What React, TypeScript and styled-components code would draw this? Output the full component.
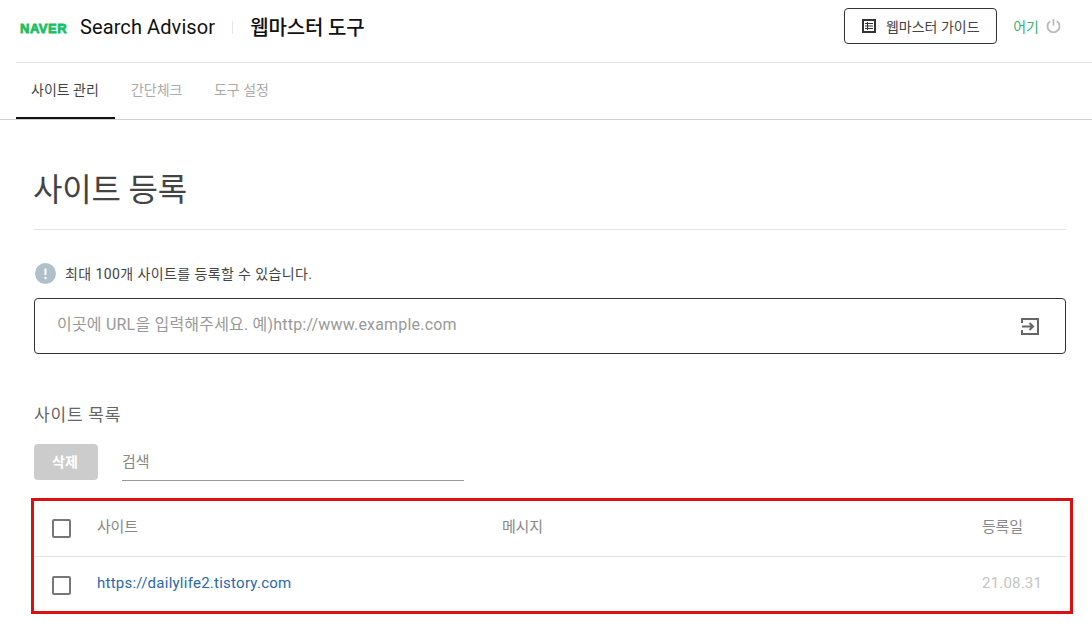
import styled, { createGlobalStyle } from "styled-components";

const GlobalStyle = createGlobalStyle`
  html, body {
    margin: 0;
    padding: 0;
    background: #fff;
    overflow: hidden;
  }
  body {
    font-family: Roboto, "Noto Sans CJK KR", sans-serif;
    color: #222;
  }
`;

const Page = styled.div`
  width: 1092px;
  height: 632px;
  overflow: hidden;
`;

const Header = styled.header`
  height: 62px;
  margin-left: 16px;
  padding: 0 31px 0 4px;
  display: flex;
  align-items: center;
  border-bottom: 1px solid #e2e2e2;
`;

const HeaderInner = styled.div`
  flex: 1;
  display: flex;
  align-items: center;
  margin-bottom: 9px;
`;

const NaverLogo = styled.span`
  width: 60px;
  margin-top: 4px;
  font-family: "Liberation Sans", sans-serif;
  font-size: 13px;
  font-weight: 700;
  letter-spacing: 0.5px;
  color: #15c05f;
  -webkit-text-stroke: 0.8px #15c05f;
`;

const BrandName = styled.span`
  font-size: 20px;
  letter-spacing: 0.1px;
  color: #111;
`;

const BrandDivider = styled.i`
  width: 1px;
  height: 13px;
  margin: 2px 17px 0 17px;
  background: #e4e4e4;
`;

const ToolName = styled.strong`
  font-size: 20px;
  font-weight: 500;
  letter-spacing: -0.15px;
  color: #111;
`;

const HeaderRight = styled.div`
  margin: 0 0 2px auto;
  display: flex;
  align-items: center;
`;

const GuideButton = styled.button`
  width: 153px;
  height: 36px;
  display: flex;
  align-items: center;
  justify-content: center;
  gap: 10px;
  padding: 0;
  background: #fff;
  border: 1px solid #333;
  border-radius: 4px;
  font-family: inherit;
  font-size: 14px;
  color: #444;
`;

const Logout = styled.span`
  margin-left: 16px;
  display: flex;
  align-items: center;
  gap: 7px;
  font-size: 14px;
  color: #2fb36f;
`;

const Tabs = styled.nav`
  height: 56px;
  padding-left: 16px;
  display: flex;
  border-bottom: 1px solid #cfcfcf;
`;

const Tab = styled.a<{ $active?: boolean }>`
  height: 56px;
  box-sizing: border-box;
  padding: 0 ${(p) => (p.$active ? "16px" : "15.5px")} 3px ${(p) => (p.$active ? "15px" : "16px")};
  display: flex;
  align-items: center;
  font-size: 14px;
  color: ${(p) => (p.$active ? "#444" : "#aaa")};
  border-bottom: 2px solid ${(p) => (p.$active ? "#111" : "transparent")};
`;

const Main = styled.main`
  padding: 0 26px 0 34px;
`;

const Title = styled.h1`
  margin: 0;
  height: 110px;
  box-sizing: border-box;
  padding-top: 47px;
  font-size: 32px;
  line-height: 46px;
  font-weight: 400;
  letter-spacing: -0.2px;
  text-indent: -1px;
  color: #444;
  border-bottom: 1px solid #e2e2e2;
`;

const Notice = styled.p`
  margin: 33px 0 0 1px;
  height: 20px;
  display: flex;
  align-items: center;
  gap: 9px;
  font-size: 14px;
  letter-spacing: 0.4px;
  color: #444;
`;

const UrlBox = styled.div`
  margin-top: 15px;
  height: 56px;
  box-sizing: border-box;
  padding: 0 25px 0 22px;
  display: flex;
  align-items: center;
  justify-content: space-between;
  border: 1px solid #333;
  border-radius: 4px;
`;

const UrlInput = styled.input`
  flex: 1;
  border: 0;
  outline: 0;
  padding: 0 0 3px;
  font-family: inherit;
  font-size: 16px;
  letter-spacing: 0.2px;
  color: #333;
  &::placeholder {
    color: #999;
    opacity: 1;
  }
`;

const SectionTitle = styled.h2`
  margin: 50px 0 0;
  height: 22px;
  font-size: 17px;
  line-height: 22px;
  font-weight: 400;
  letter-spacing: 0.8px;
  color: #666;
`;

const Toolbar = styled.div`
  margin-top: 18px;
  display: flex;
  gap: 24px;
`;

const DeleteButton = styled.button`
  width: 64px;
  height: 36px;
  padding: 0 2px 2px 0;
  border: 0;
  border-radius: 4px;
  background: #ccc;
  font-family: inherit;
  font-size: 14px;
  font-weight: 700;
  color: #fff;
`;

const SearchInput = styled.input`
  width: 342px;
  height: 37px;
  box-sizing: border-box;
  border: 0;
  border-bottom: 1px solid #999;
  outline: 0;
  padding: 0;
  font-family: inherit;
  font-size: 15px;
  &::placeholder {
    color: #888;
    opacity: 1;
  }
`;

const TableFrame = styled.section`
  margin: 17px -7px 0 -3px;
  height: 116px;
  box-sizing: border-box;
  border: 3px solid #dd0f0f;
`;

const Row = styled.div<{ $head?: boolean }>`
  height: ${(p) => (p.$head ? "55px" : "56px")};
  margin-right: 4px;
  padding-right: 24px;
  display: grid;
  grid-template-columns: 63px 405px 1fr 60px;
  align-items: center;
  border-bottom: ${(p) => (p.$head ? "1px solid #e2e2e2" : "0")};
`;

const Check = styled.span`
  display: block;
  width: 15px;
  height: 15px;
  margin-left: 18px;
  border: 2px solid #777;
  border-radius: 2px;
`;

const HeadCell = styled.span`
  margin-bottom: 7px;
  font-size: 15px;
  letter-spacing: -0.2px;
  color: #888;
`;

const SiteLink = styled.a`
  margin-bottom: 4px;
  font-size: 15px;
  letter-spacing: 0.25px;
  color: #2a68ad;
`;

const DateCell = styled.span`
  margin-bottom: 4px;
  font-size: 15px;
  letter-spacing: 0.2px;
  color: #c4c4c4;
`;

export default function App() {
  return (
    <Page>
      <GlobalStyle />
      <Header>
        <HeaderInner>
          <NaverLogo>NAVER</NaverLogo>
          <BrandName>Search Advisor</BrandName>
          <BrandDivider />
          <ToolName>웹마스터 도구</ToolName>
          <HeaderRight>
            <GuideButton>
              <svg width="14" height="14" viewBox="0 0 14 14">
                <rect x="1" y="1" width="12" height="12" fill="none" stroke="#333" strokeWidth="2" />
                <path d="M3 4.5h8M3 7h8M3 9.5h8M5.5 3v8" stroke="#333" strokeWidth="1" />
              </svg>
              웹마스터 가이드
            </GuideButton>
            <Logout>
              어기
              <svg width="15" height="15" viewBox="0 0 15 15" fill="none" stroke="#bbb" strokeWidth="1.8">
                <path d="M7.5 1v6.5" />
                <path d="M4.3 3.2a6 6 0 1 0 6.4 0" />
              </svg>
            </Logout>
          </HeaderRight>
        </HeaderInner>
      </Header>
      <Tabs>
        <Tab $active>사이트 관리</Tab>
        <Tab>간단체크</Tab>
        <Tab>도구 설정</Tab>
      </Tabs>
      <Main>
        <Title>사이트 등록</Title>
        <Notice>
          <svg width="21" height="21" viewBox="0 0 21 21">
            <circle cx="10.5" cy="10.5" r="10.5" fill="#b0c0ca" />
            <path d="M10.5 5.5v6.5" stroke="#fff" strokeWidth="2" />
            <circle cx="10.5" cy="15" r="1.2" fill="#fff" />
          </svg>
          최대 100개 사이트를 등록할 수 있습니다.
        </Notice>
        <UrlBox>
          <UrlInput placeholder="이곳에 URL을 입력해주세요. 예)http://www.example.com" />
          <svg width="20" height="19" viewBox="0 0 20 19" fill="none" stroke="#666" strokeWidth="2">
            <path d="M2 6V2h16v15H2v-4" />
            <path d="M2 9.5h11M9.5 6 13 9.5 9.5 13" />
          </svg>
        </UrlBox>
        <SectionTitle>사이트 목록</SectionTitle>
        <Toolbar>
          <DeleteButton>삭제</DeleteButton>
          <SearchInput placeholder="검색" />
        </Toolbar>
        <TableFrame>
          <Row $head>
            <Check />
            <HeadCell>사이트</HeadCell>
            <HeadCell>메시지</HeadCell>
            <HeadCell>등록일</HeadCell>
          </Row>
          <Row>
            <Check />
            <SiteLink>https://dailylife2.tistory.com</SiteLink>
            <span />
            <DateCell>21.08.31</DateCell>
          </Row>
        </TableFrame>
      </Main>
    </Page>
  );
}
